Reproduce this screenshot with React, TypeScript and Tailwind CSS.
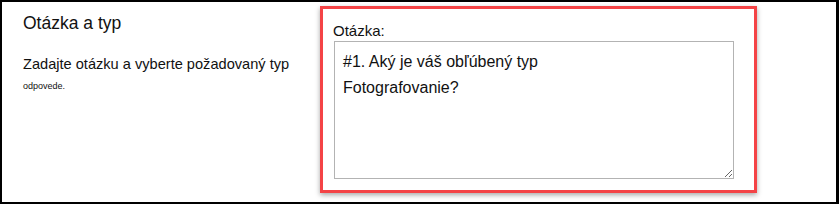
export default function App() {
  return (
    <div
      className="w-[839px] h-[204px] bg-white border-black border-t-2 border-l-2 border-b-2 border-r-[3px] flex overflow-hidden"
      style={{ fontFamily: '"Liberation Sans", Arial, sans-serif' }}
    >
      <div className="w-[318px] shrink-0 pl-[21px] pt-[10px] text-[#111]">
        <div className="text-[17.5px] leading-[22px]">Otázka a typ</div>
        <div className="mt-[21px] text-[14.6px] leading-[18px]">
          Zadajte otázku a vyberte požadovaný typ
        </div>
        <div className="mt-[7px] text-[9px] leading-[12px]">odpovede.</div>
      </div>
      <div className="mt-[4px] w-[437px] h-[187px] border-[3px] border-[#f44346] shadow-[0_2px_5px_rgba(0,0,0,0.35)] pl-[10px] pt-[13px]">
        <label className="block text-[15px] leading-[17px] text-[#111]">Otázka:</label>
        <textarea
          readOnly
          value={"#1. Aký je váš obľúbený typ\nFotografovanie?"}
          className="mt-[2px] ml-px block w-[400px] h-[138px] border border-[#b3b3b3] px-[8px] pt-[7px] text-[16px] leading-[26px] text-[#111] outline-none"
          style={{ fontFamily: '"Liberation Sans", Arial, sans-serif' }}
        />
      </div>
    </div>
  );
}
